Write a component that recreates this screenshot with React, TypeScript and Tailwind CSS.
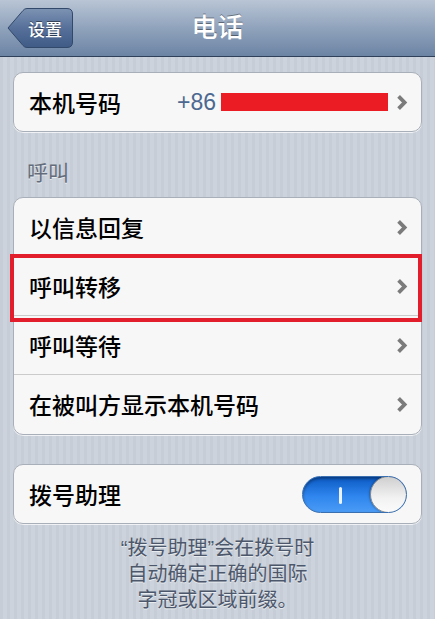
import React from 'react';

const Chevron: React.FC = () => (
  <svg width="12" height="17" viewBox="0 0 12 17" className="shrink-0">
    <path d="M2.6 2.4 L8.6 8.5 L2.6 14.6" fill="none" stroke="#7b7b7b" strokeWidth="3.8" strokeLinejoin="miter" />
  </svg>
);

const Row: React.FC<{ label: string; last?: boolean }> = ({ label, last }) => (
  <div
    className={`flex items-center justify-between h-[59px] pl-[15px] pr-[13px] ${
      last ? '' : 'border-b border-[#cbcbcb]'
    }`}
  >
    <span className="text-[23px] font-medium text-black leading-none">{label}</span>
    <Chevron />
  </div>
);

const Toggle: React.FC = () => (
  <div className="relative w-[105px] h-[37px] rounded-full border border-[#3a6fb0] bg-[linear-gradient(#0c5ac4,#2f86ee_55%,#4a9bf5)] shadow-[inset_0_2px_3px_rgba(0,0,0,0.35)] overflow-hidden">
    <div className="absolute left-[36px] top-[10px] w-[3px] h-[17px] bg-white/90 rounded-sm" />
    <div className="absolute right-[-1px] top-[-1px] w-[37px] h-[37px] rounded-full border border-[#8d8d8d] bg-[linear-gradient(#cfcfcf,#f2f2f2_60%,#fbfbfb)] shadow-[-1px_0_2px_rgba(0,0,0,0.25)]" />
  </div>
);

const App: React.FC = () => {
  return (
    <div className="w-[435px] h-[619px] overflow-hidden bg-[repeating-linear-gradient(90deg,#c6cdd6_0px,#c6cdd6_3px,#ccd3dc_3px,#ccd3dc_7px)] font-['Noto_Sans_CJK_SC','Liberation_Sans',sans-serif]">
      {/* Nav bar */}
      <div className="relative flex items-center justify-center h-[57px] bg-[linear-gradient(#b9c5d5,#90a3bc_50%,#6c84a4)] border-b border-[#2f405a]">
        <button className="absolute left-[7px] top-[8px] w-[66px] h-[40px] flex items-center justify-center">
          <svg width="66" height="40" viewBox="0 0 66 40" className="absolute inset-0">
            <defs>
              <linearGradient id="bb" x1="0" y1="0" x2="0" y2="1">
                <stop offset="0" stopColor="#7d93b3" />
                <stop offset="0.5" stopColor="#56709a" />
                <stop offset="1" stopColor="#3f5b86" />
              </linearGradient>
            </defs>
            <path
              d="M1 20 L16 2.5 Q17.5 0.5 20 0.5 L60 0.5 Q65.5 0.5 65.5 6 L65.5 34 Q65.5 39.5 60 39.5 L20 39.5 Q17.5 39.5 16 37.5 Z"
              fill="url(#bb)"
              stroke="#33496b"
              strokeWidth="1"
            />
          </svg>
          <span className="relative pl-[10px] text-[17px] font-medium text-white leading-none [text-shadow:0_-1px_0_rgba(0,0,0,0.45)]">
            设置
          </span>
        </button>
        <h1 className="text-[26px] font-medium text-white leading-none -mt-[4px] [text-shadow:0_-1px_0_rgba(0,0,0,0.4)]">
          电话
        </h1>
      </div>

      <div className="px-[13px]">
        {/* My number */}
        <div className="mt-[15px] h-[60px] flex items-center pl-[15px] pr-[13px] bg-[#f7f7f7] border border-[#a9afb8] rounded-[10px] shadow-[0_1px_0_rgba(255,255,255,0.7)]">
          <span className="text-[23px] font-medium text-black leading-none">本机号码</span>
          <span className="ml-[56px] text-[23px] text-[#4c6890] leading-none font-['Liberation_Sans',sans-serif]">+86</span>
          <div className="ml-[5px] w-[167px] h-[18px] bg-[#ec1c24]" />
          <div className="ml-auto">
            <Chevron />
          </div>
        </div>

        {/* Section header */}
        <div className="mt-[29px] pl-[14px] text-[21px] text-[#646c7b] leading-none [text-shadow:0_1px_0_rgba(255,255,255,0.6)]">
          呼叫
        </div>

        {/* Calls group */}
        <div className="relative mt-[15px] bg-[#f7f7f7] border border-[#a9afb8] rounded-[10px] shadow-[0_1px_0_rgba(255,255,255,0.7)]">
          <Row label="以信息回复" />
          <Row label="呼叫转移" />
          <Row label="呼叫等待" />
          <Row label="在被叫方显示本机号码" last />
          {/* red annotation */}
          <div className="absolute left-[-4px] top-[56px] w-[412px] h-[68px] border-[4px] border-[#e31e2c] pointer-events-none" />
        </div>

        {/* Dial assist */}
        <div className="mt-[29px] h-[60px] flex items-center justify-between pl-[15px] pr-[14px] bg-[#f7f7f7] border border-[#a9afb8] rounded-[10px] shadow-[0_1px_0_rgba(255,255,255,0.7)]">
          <span className="text-[23px] font-medium text-black leading-none">拨号助理</span>
          <Toggle />
        </div>

        <div className="mt-[11px] flex flex-col items-center text-[20px] text-[#4d576b] font-['Liberation_Sans','Noto_Sans_CJK_SC',sans-serif] [text-shadow:0_1px_0_rgba(255,255,255,0.6)]">
          <div className="h-[26px] leading-[26px]">“拨号助理”会在拨号时</div>
          <div className="h-[26px] leading-[26px]">自动确定正确的国际</div>
          <div className="h-[26px] leading-[26px]">字冠或区域前缀。</div>
        </div>
      </div>
    </div>
  );
};

export default App;
